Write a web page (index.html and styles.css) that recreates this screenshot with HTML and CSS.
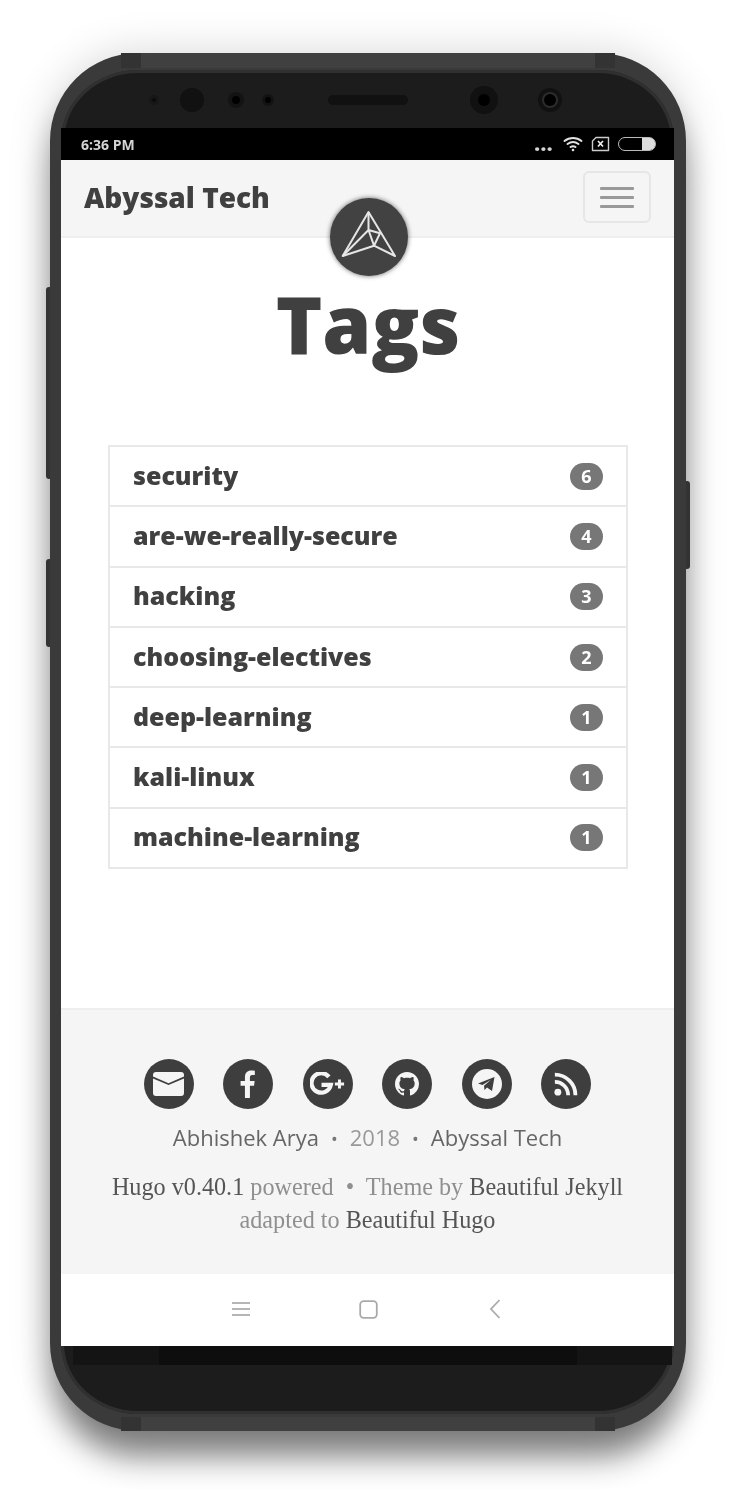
FILE: index.html
```html
<!DOCTYPE html>
<html lang="en">
<head>
	<meta charset="utf-8" />
	<title>Tags | Abyssal Tech</title>
	<link rel="stylesheet" href="styles.css">
</head>
<body>
	<div class="phone">
		<span class="side-btn vol-up"></span>
		<span class="side-btn vol-down"></span>
		<span class="side-btn power"></span>
		<span class="band band-top"></span>
		<span class="band band-bottom"></span>

		<div class="bezel">
			<span class="lens lens-a"></span>
			<span class="lens lens-b"></span>
			<span class="lens lens-c"></span>
			<span class="lens lens-d"></span>
			<span class="speaker"></span>
			<span class="lens lens-e"></span>
			<span class="lens lens-f"></span>
		</div>

		<div class="status">
			<span class="clock">6:36 PM</span>
			<span class="status-icons">
				<span class="dots">...</span>
				<svg width="20" height="16" viewBox="0 0 20 16" fill="none" stroke="#e2e2e2" stroke-width="2" stroke-linecap="round">
					<path d="M1.5 5C6.5 1 13.5 1 18.5 5" />
					<path d="M4.5 8C8 5.5 12 5.5 15.5 8" />
					<path d="M7.5 11C9 10 11 10 12.5 11" />
					<circle cx="10" cy="14" r="1.3" fill="#e2e2e2" stroke="none" />
				</svg>
				<svg width="19" height="16" viewBox="0 0 19 16" fill="none" stroke="#ccc" stroke-width="1.4">
					<path d="M5 1.5H17.5V14.5H1.5V5Z" stroke-linejoin="round" />
					<path d="M7 5L12 10.5M12 5L7 10.5" stroke="#eee" stroke-width="1.7" />
				</svg>
				<span class="battery"><span class="battery-fill"></span></span>
			</span>
		</div>

		<div class="screen">
			<nav class="navbar">
				<a class="brand">Abyssal Tech</a>
				<button class="toggle"><i></i><i></i><i></i></button>
			</nav>
			<div class="avatar">
				<svg width="78" height="78" viewBox="0 0 78 78" fill="none" stroke="#e6e6e6" stroke-width="2" stroke-linejoin="round">
					<path d="M38.5 14L12.7 58L44 47.7L65 58Z" />
					<path d="M38.5 14V32L12.7 58M38.5 32L50 35.3L44 47.7L38.5 32" />
				</svg>
			</div>

			<main class="content">
				<h1 class="title">Tags</h1>
				<ul class="tags">
					<li class="tag"><a>security</a><span class="badge">6</span></li>
					<li class="tag"><a>are-we-really-secure</a><span class="badge">4</span></li>
					<li class="tag"><a>hacking</a><span class="badge">3</span></li>
					<li class="tag"><a>choosing-electives</a><span class="badge">2</span></li>
					<li class="tag"><a>deep-learning</a><span class="badge">1</span></li>
					<li class="tag"><a>kali-linux</a><span class="badge">1</span></li>
					<li class="tag"><a>machine-learning</a><span class="badge">1</span></li>
				</ul>
			</main>

			<footer class="footer">
				<div class="socials">
					<a class="social">
						<svg width="31" height="24" viewBox="0 0 31 24"><path fill="#f5f5f5" d="M3 0H28A3 3 0 0 1 31 3V4.6L15.5 11.2L0 4.6V3A3 3 0 0 1 3 0ZM0 6.4L15.5 13L31 6.4V21A3 3 0 0 1 28 24H3A3 3 0 0 1 0 21Z" /></svg>
					</a>
					<a class="social">
						<svg width="16" height="28" viewBox="0 0 18 32"><path fill="#f5f5f5" d="M5.5 32V18H0.5V12.5H5.5V8C5.5 3 8.5 0.5 12.6 0.5C14.6 0.5 16.2 0.7 16.8 0.8V5.6H14C11.7 5.6 11.2 6.7 11.2 8.4V12.5H16.6L15.9 18H11.2V32Z" /></svg>
					</a>
					<a class="social">
						<svg width="35" height="24" viewBox="0 0 38 26" fill="none" stroke="#f5f5f5" stroke-width="4.6">
							<path d="M20.5 5.2A10.6 10.6 0 1 0 22.6 14H12.5" />
							<path d="M27 13H37M32 8V18" stroke-width="3.2" />
						</svg>
					</a>
					<a class="social">
						<svg width="24" height="24" viewBox="0 0 16 16"><path fill="#f5f5f5" d="M8 0C3.58 0 0 3.58 0 8c0 3.54 2.29 6.53 5.47 7.59.4.07.55-.17.55-.38 0-.19-.01-.82-.01-1.49-2.01.37-2.53-.49-2.69-.94-.09-.23-.48-.94-.82-1.13-.28-.15-.68-.52-.01-.53.63-.01 1.08.58 1.23.82.72 1.21 1.87.87 2.33.66.07-.52.28-.87.51-1.07-1.78-.2-3.64-.89-3.64-3.95 0-.87.31-1.59.82-2.15-.08-.2-.36-1.02.08-2.12 0 0 .67-.21 2.2.82.64-.18 1.32-.27 2-.27.68 0 1.36.09 2 .27 1.53-1.04 2.2-.82 2.2-.82.44 1.1.16 1.92.08 2.12.51.56.82 1.27.82 2.15 0 3.07-1.87 3.75-3.65 3.95.29.25.54.73.54 1.48 0 1.07-.01 1.93-.01 2.2 0 .21.15.46.55.38A8.013 8.013 0 0016 8c0-4.42-3.58-8-8-8z" /></svg>
					</a>
					<a class="social">
						<svg width="30" height="30" viewBox="0 0 30 30">
							<circle cx="15" cy="15" r="15" fill="#f5f5f5" />
							<path fill="#3e3e3e" d="M6 14.5L22.5 8L20 22L15 18.5L12.5 21L12 16.8L19 10.8L10.5 16Z" />
						</svg>
					</a>
					<a class="social">
						<svg width="24" height="24" viewBox="0 0 28 28" fill="none" stroke="#f5f5f5" stroke-width="4.4">
							<circle cx="4.5" cy="23.5" r="4" fill="#f5f5f5" stroke="none" />
							<path d="M1 11.5A15.5 15.5 0 0 1 16.5 27" />
							<path d="M1 3A24 24 0 0 1 25 27" />
						</svg>
					</a>
				</div>
				<p class="credit"><a>Abhishek Arya</a><i>•</i><span>2018</span><i>•</i><a>Abyssal Tech</a></p>
				<p class="powered"><a>Hugo v0.40.1</a> powered &nbsp;•&nbsp; Theme by <a>Beautiful Jekyll</a><br>adapted to <a>Beautiful Hugo</a></p>
			</footer>

			<div class="softkeys">
				<svg width="18" height="16" viewBox="0 0 18 16" stroke="#b5b5b5" stroke-width="2"><path d="M0 2H18M0 8H18M0 14H18" /></svg>
				<svg width="19" height="19" viewBox="0 0 19 19" fill="none" stroke="#aaa" stroke-width="1.8"><rect x="1.2" y="1.2" width="16.6" height="16.6" rx="3.5" /></svg>
				<svg width="12" height="20" viewBox="0 0 12 20" fill="none" stroke="#aaa" stroke-width="1.8"><path d="M10.5 1L2 10L10.5 19" /></svg>
			</div>
		</div>

		<div class="chin"><span class="chin-mid"></span></div>
	</div>
</body>
</html>
```

FILE: styles.css
```css
html { background: #fff; }
body {
	margin: 0;
	height: 1489px;
	overflow: hidden;
	padding: 53px 0 0 50px;
	box-sizing: border-box;
	font-family: "Open Sans", sans-serif;
}
ul { margin: 0; padding: 0; list-style: none; }

.phone {
	position: relative;
	width: 636px;
	height: 1378px;
	box-sizing: border-box;
	border: solid #3a3a3a;
	border-width: 17px 12px 17px 11px;
	border-radius: 88px;
	background: #1c1c1c;
	box-shadow: inset 0 0 0 3px #303030, 0 30px 32px -4px rgba(0, 0, 0, .48), 0 0 44px rgba(0, 0, 0, .16);
	display: flex;
	flex-direction: column;
	filter: blur(.45px);
}
.side-btn {
	position: absolute;
	width: 4px;
	background: #333;
}
.vol-up { left: -15px; top: 217px; height: 192px; border-radius: 3px 0 0 3px; }
.vol-down { left: -15px; top: 489px; height: 88px; border-radius: 3px 0 0 3px; }
.power { right: -16px; top: 411px; height: 88px; border-radius: 0 3px 3px 0; }

.band {
	position: absolute;
	left: 60px;
	width: 494px;
	height: 15px;
	box-sizing: border-box;
	background: #404040;
	border: solid #333;
	border-width: 0 20px;
}
.band-top { top: -17px; }
.band-bottom { bottom: -17px; height: 14px; }

.bezel {
	height: 58px;
	flex: none;
	box-sizing: border-box;
	display: flex;
	align-items: center;
	padding: 2px 0 0 88px;
}
.lens { border-radius: 50%; flex: none; background: #131313; display: block; position: relative; }
.lens::after {
	content: "";
	position: absolute;
	inset: 0;
	margin: auto;
	border-radius: 50%;
	background: #000;
}
.lens-a { width: 10px; height: 10px; background: #171717; }
.lens-a::after { width: 4px; height: 4px; background: #0b0b0b; }
.lens-b { width: 24px; height: 24px; margin-left: 21px; background: #111; }
.lens-b::after { display: none; }
.lens-c { width: 16px; height: 16px; margin-left: 24px; }
.lens-c::after { width: 8px; height: 8px; }
.lens-d { width: 12px; height: 12px; margin-left: 18px; }
.lens-d::after { width: 6px; height: 6px; }
.speaker { width: 80px; height: 10px; margin-left: 54px; border-radius: 5px; background: #111; flex: none; }
.lens-e { width: 28px; height: 28px; margin-left: 62px; background: #111; }
.lens-e::after { width: 12px; height: 12px; }
.lens-f { width: 24px; height: 24px; margin-left: 40px; background: #111; }
.lens-f::after { width: 12px; height: 12px; box-shadow: 0 0 0 2px #2c2c2c; }

.status {
	height: 32px;
	flex: none;
	background: #000;
	color: #d4d4d4;
	display: flex;
	align-items: center;
	justify-content: space-between;
	padding: 0 18px 0 20px;
}
.clock { font-size: 14px; font-weight: 700; }
.status-icons { display: flex; align-items: center; gap: 8px; }
.dots { font-size: 20px; font-weight: 800; letter-spacing: .5px; line-height: 16px; margin: -1px 2px 0 0; }
.battery {
	width: 38px;
	height: 14px;
	box-sizing: border-box;
	border: 1.5px solid #bbb;
	border-radius: 7px;
	display: flex;
	justify-content: flex-end;
}
.battery-fill { width: 13px; background: #ddd; border-radius: 0 5px 5px 0; }

.screen {
	position: relative;
	background: #fff;
	height: 1186px;
	flex: none;
	display: flex;
	flex-direction: column;
}
.navbar {
	height: 78px;
	flex: none;
	box-sizing: border-box;
	background: #f5f5f5;
	border-bottom: 2px solid #eee;
	display: flex;
	align-items: center;
	justify-content: space-between;
	padding: 0 23px 2px 23px;
}
.brand { font-size: 28px; font-weight: 800; color: #404040; }
.toggle {
	width: 68px;
	height: 52px;
	padding: 0;
	background: none;
	border: 2px solid #e6e6e6;
	border-radius: 6px;
	display: flex;
	flex-direction: column;
	align-items: center;
	justify-content: center;
	gap: 6px;
}
.toggle i { width: 34px; height: 3px; border-radius: 1px; background: #999; }
.avatar {
	position: absolute;
	left: 269px;
	top: 38px;
	width: 78px;
	height: 78px;
	border-radius: 50%;
	background: #424242;
	box-shadow: 0 0 5px rgba(0, 0, 0, .6);
}
.avatar svg { display: block; }

.content { flex: 1; padding: 36px 46px 0 47px; }
.title {
	margin: 0;
	height: 171px;
	text-align: center;
	font-size: 79px;
	font-weight: 800;
	line-height: 99px;
	color: #404040;
}
.tags { border-top: 2px solid #e8e8e8; }
.tag {
	height: 58.3px;
	display: flex;
	align-items: center;
	justify-content: space-between;
	padding: 0 23px 0 23px;
	border: 2px solid #e8e8e8;
	border-top: 0;
	font-size: 25px;
	font-weight: 800;
	color: #404040;
}
.tag a { margin-top: -3px; }
.badge {
	width: 33px;
	height: 27px;
	border-radius: 14px;
	background: #777;
	color: #fff;
	font-size: 18px;
	font-weight: 700;
	line-height: 27px;
	text-align: center;
}

.footer {
	height: 266px;
	flex: none;
	box-sizing: border-box;
	background: #f5f5f5;
	border-top: 2px solid #eee;
	padding-top: 49px;
	text-align: center;
	color: #8a8a8a;
}
.socials { display: flex; justify-content: center; gap: 29.6px; }
.social {
	width: 50px;
	height: 50px;
	border-radius: 50%;
	background: #3e3e3e;
	display: flex;
	align-items: center;
	justify-content: center;
}
.credit { margin: 13px 0 0; font-size: 22px; line-height: 30px; color: #999; }
.credit a { color: #666; }
.credit i { font-style: normal; margin: 0 12px; color: #777; font-size: 18px; }
.powered {
	margin: 16px 0 0;
	font-family: "Liberation Serif", serif;
	font-size: 24.2px;
	line-height: 33px;
	color: #8f8f8f;
}
.powered a { color: #555; }

.softkeys {
	height: 72px;
	flex: none;
	box-sizing: border-box;
	background: #fff;
	display: grid;
	grid-template-columns: 127px 127px 127px;
	justify-content: center;
	justify-items: center;
	align-items: center;
	padding: 0 0 2px 1px;
}

.chin { height: 68px; flex: none; }
.chin-mid {
	display: block;
	height: 19px;
	margin: 0 2px 0 12px;
	background: linear-gradient(to right, #141414 86px, #0e0e0e 86px, #0e0e0e 504px, #141414 504px);
}
```
